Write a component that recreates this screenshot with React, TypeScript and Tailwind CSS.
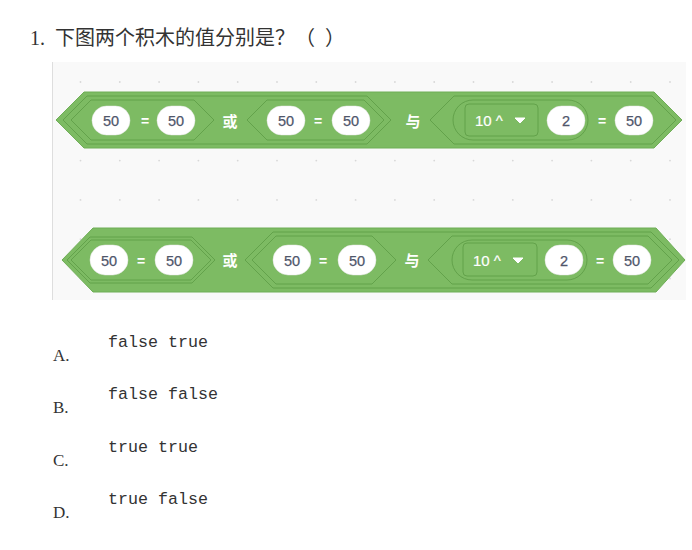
import React from "react";

const FILL = "#7dbb63";
const STROKE = "#63a24b";
const OVAL_TEXT = "#4f566b";

function hex(xl: number, xr: number, top: number, bottom: number, s: number) {
  const yc = (top + bottom) / 2;
  return `${xl},${yc} ${xl + s},${top} ${xr - s},${top} ${xr},${yc} ${xr - s},${bottom} ${xl + s},${bottom}`;
}

function Hex({ xl, xr, top, bottom, s, outer }: { xl: number; xr: number; top: number; bottom: number; s: number; outer?: boolean }) {
  return (
    <polygon
      points={hex(xl, xr, top, bottom, s)}
      fill={FILL}
      stroke={outer ? "#6fae57" : STROKE}
      strokeWidth={1}
      strokeLinejoin="round"
    />
  );
}

function Oval({ cx, y, h, text }: { cx: number; y: number; h: number; text: string }) {
  const w = 38;
  return (
    <g>
      <rect x={cx - w / 2} y={y} width={w} height={h} rx={h / 2} fill="#ffffff" stroke="#e6e6e6" strokeWidth={0.5} />
      <text
        x={cx}
        y={y + h / 2 + 0.5}
        textAnchor="middle"
        dominantBaseline="central"
        fontFamily="'Liberation Sans', Arial, sans-serif"
        fontSize={14.5}
        fill={OVAL_TEXT}
        stroke={OVAL_TEXT}
        strokeWidth={0.25}
      >
        {text}
      </text>
    </g>
  );
}

function Label({ x, y, text, cjk }: { x: number; y: number; text: string; cjk?: boolean }) {
  return (
    <text
      x={x}
      y={y}
      textAnchor="middle"
      dominantBaseline="central"
      fontFamily={cjk ? "'Noto Sans CJK SC', sans-serif" : "'Liberation Sans', Arial, sans-serif"}
      fontSize={cjk ? 15 : 14}
      fontWeight={700}
      fill="#ffffff"
    >
      {text}
    </text>
  );
}

function Reporter({ x1, x2, top, bottom, dd, yc }: { x1: number; x2: number; top: number; bottom: number; dd: [number, number, number, number]; yc: number }) {
  const h = bottom - top;
  return (
    <g>
      <rect x={x1} y={top} width={x2 - x1} height={h} rx={h / 2} fill={FILL} stroke={STROKE} strokeWidth={1} />
      <rect x={dd[0]} y={dd[1]} width={dd[2] - dd[0]} height={dd[3] - dd[1]} rx={4} fill={FILL} stroke={STROKE} strokeWidth={1} />
      <text
        x={dd[0] + 10}
        y={yc + 0.5}
        dominantBaseline="central"
        fontFamily="'Liberation Sans', Arial, sans-serif"
        fontSize={15}
        fill="#ffffff"
        stroke="#ffffff"
        strokeWidth={0.2}
      >
        10 ^
      </text>
      <polygon points={`${dd[0] + 50},${yc - 2} ${dd[0] + 60},${yc - 2} ${dd[0] + 55},${yc + 3}`} fill="#ffffff" strokeLinejoin="round" stroke="#ffffff" strokeWidth={1} />
    </g>
  );
}

function Dots() {
  const out: React.ReactNode[] = [];
  for (let i = 0; i < 17; i++) {
    for (let j = 0; j < 6; j++) {
      const x = 80.5 + 39.3 * i;
      const y = 82 + 39.3 * j;
      if (x < 686) out.push(<circle key={`${i}-${j}`} cx={x} cy={y} r={0.9} fill="#d8d8d8" />);
    }
  }
  return <g>{out}</g>;
}

function Blocks() {
  return (
    <svg width={633} height={238} viewBox="53 62 633 238" className="block">
      <Dots />
      {/* Block 1: ((50=50) 或 (50=50)) 与 ((10^ 2) = 50) */}
      <Hex xl={56} xr={682} top={92} bottom={148} s={28} outer />
      <Hex xl={63} xr={391} top={96} bottom={144} s={24} />
      <Hex xl={71} xr={214} top={100} bottom={140} s={20} />
      <Oval cx={111} y={106} h={29} text="50" />
      <Label x={145} y={121} text="=" />
      <Oval cx={176} y={106} h={29} text="50" />
      <Label x={230} y={120} text="或" cjk />
      <Hex xl={247} xr={384} top={100} bottom={140} s={20} />
      <Oval cx={286} y={106} h={29} text="50" />
      <Label x={318} y={121} text="=" />
      <Oval cx={351} y={106} h={29} text="50" />
      <Label x={413} y={120} text="与" cjk />
      <Hex xl={430} xr={676} top={96} bottom={144} s={24} />
      <Reporter x1={453} x2={588} top={100} bottom={140} dd={[465, 104, 538, 136]} yc={120} />
      <Oval cx={566} y={106} h={29} text="2" />
      <Label x={602} y={121} text="=" />
      <Oval cx={634} y={106} h={29} text="50" />

      {/* Block 2: (50=50) 或 ((50=50) 与 ((10^ 2) = 50)) */}
      <polygon points="62,260 93,228 656,228 685,260 656,292 93,292" fill={FILL} stroke="#6fae57" strokeWidth={1} strokeLinejoin="round" />
      <Hex xl={67} xr={215} top={237} bottom={283} s={23} />
      <Hex xl={71} xr={211} top={240} bottom={280} s={20} />
      <Oval cx={109} y={245} h={30} text="50" />
      <Label x={141} y={261} text="=" />
      <Oval cx={174} y={245} h={30} text="50" />
      <Label x={230} y={259} text="或" cjk />
      <Hex xl={245} xr={679} top={232} bottom={288} s={28} />
      <Hex xl={252} xr={396} top={236} bottom={284} s={24} />
      <Oval cx={292} y={245} h={30} text="50" />
      <Label x={323} y={261} text="=" />
      <Oval cx={357} y={245} h={30} text="50" />
      <Label x={412} y={259} text="与" cjk />
      <Hex xl={428} xr={672} top={236} bottom={284} s={24} />
      <Reporter x1={452} x2={587} top={240} bottom={280} dd={[463, 243, 537, 276]} yc={260} />
      <Oval cx={564} y={245} h={30} text="2" />
      <Label x={600} y={261} text="=" />
      <Oval cx={632} y={245} h={30} text="50" />
    </svg>
  );
}

const options = [
  { label: "A.", text: "false true" },
  { label: "B.", text: "false false" },
  { label: "C.", text: "true true" },
  { label: "D.", text: "true false" },
];

export default function App() {
  return (
    <div className="w-[692px] h-[550px] bg-white text-[#333] font-['Liberation_Serif','Noto_Sans_CJK_SC',serif] overflow-hidden">
      <div className="pt-[24px] pl-[30px] text-[20px] leading-[28px] whitespace-pre">
        <span>1.</span>
        <span className="ml-[10px]">下图两个积木的值分别是？（  ）</span>
      </div>
      <div className="mt-[10px] ml-[52px] w-[634px] h-[238px] border-l border-[#dedede] bg-[#f9f9f9]">
        <Blocks />
      </div>
      <div className="mt-[30.6px] pl-[53px]">
        {options.map((o) => (
          <div key={o.label} className="flex h-[52.5px] items-start">
            <span className="w-[55px] mt-[13px] text-[17px] leading-[24px] font-['Liberation_Serif',serif]">{o.label}</span>
            <span className="text-[16.67px] leading-[24px] font-['Liberation_Mono',monospace] whitespace-pre">{o.text}</span>
          </div>
        ))}
      </div>
    </div>
  );
}
